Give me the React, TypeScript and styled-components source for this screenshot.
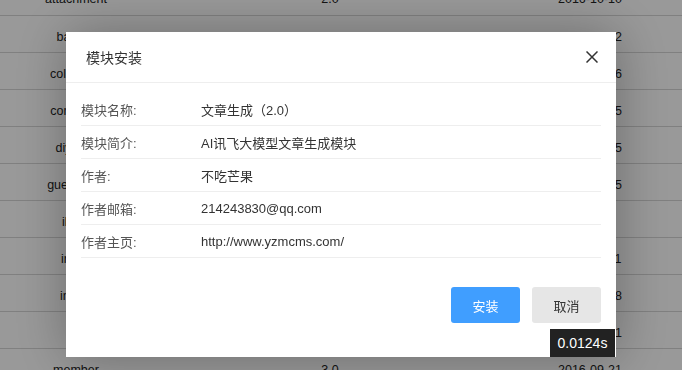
import styled, { createGlobalStyle } from 'styled-components'

const modules = [
	{ name: 'attachment', version: '2.0', date: '2016-10-10' },
	{ name: 'banner', version: '2.0', date: '2017-05-12' },
	{ name: 'collection', version: '2.0', date: '2017-04-26' },
	{ name: 'comment', version: '2.0', date: '2016-10-25' },
	{ name: 'diyform', version: '2.0', date: '2017-02-15' },
	{ name: 'guestbook', version: '2.0', date: '2016-12-05' },
	{ name: 'ilinks', version: '2.0', date: '' },
	{ name: 'index', version: '2.0', date: '2016-08-11' },
	{ name: 'install', version: '2.0', date: '2016-08-18' },
	{ name: 'mip', version: '2.0', date: '2016-09-01' },
	{ name: 'member', version: '3.0', date: '2016-09-21' },
]

const info = [
	{ label: '模块名称:', value: '文章生成（2.0）' },
	{ label: '模块简介:', value: 'AI讯飞大模型文章生成模块' },
	{ label: '作者:', value: '不吃芒果' },
	{ label: '作者邮箱:', value: '214243830@qq.com' },
	{ label: '作者主页:', value: 'http://www.yzmcms.com/' },
]

function App() {
	return (
		<>
			<GlobalStyle />
			<Page>
				<Table>
					<tbody>
						{modules.map(m => (
							<tr key={m.name}>
								<Cell>{m.name}</Cell>
								<Cell>{m.version}</Cell>
								<Cell>{m.date}</Cell>
							</tr>
						))}
					</tbody>
				</Table>
			</Page>

			<Shade>
				<Dialog>
					<Header>
						<Title>模块安装</Title>
						<Close aria-label="关闭">
							<svg width="12" height="12" viewBox="0 0 12 12">
								<path d="M0.5 0.5 L11.5 11.5 M11.5 0.5 L0.5 11.5" stroke="#333" strokeWidth="1.5" />
							</svg>
						</Close>
					</Header>
					<Body>
						{info.map(row => (
							<InfoRow key={row.label}>
								<Label>{row.label}</Label>
								<Value>{row.value}</Value>
							</InfoRow>
						))}
					</Body>
					<Footer>
						<Button $primary>安装</Button>
						<Button>取消</Button>
					</Footer>
				</Dialog>
			</Shade>

			<Timer>0.0124s</Timer>
		</>
	)
}

export default App

let GlobalStyle = createGlobalStyle`
	html, body {
		margin: 0;
		padding: 0;
		width: 682px;
		height: 370px;
		overflow: hidden;
		background: #fff;
		font-family: "Liberation Sans", "Noto Sans CJK SC", "Microsoft YaHei", sans-serif;
		color: #333;
	}
`

let Page = styled.div`
	height: 370px;
	overflow: hidden;
`

let Table = styled.table`
	width: 682px;
	margin-top: -22px;
	border-collapse: collapse;
	font-size: 12.5px;
	color: #222;

	tr {
		height: 37px;
		border-bottom: 1px solid #d6d6d6;
	}
`

let Cell = styled.td`
	padding: 6px 0 0;
	text-align: center;

	&:nth-child(1) { width: 152px; }
	&:nth-child(2) { width: 356px; }
	&:nth-child(3) { padding-right: 10px; }
`

let Shade = styled.div`
	position: fixed;
	inset: 0;
	background: rgba(0, 0, 0, 0.4);
	display: flex;
	justify-content: center;
	align-items: flex-start;
	padding-top: 32px;
	box-sizing: border-box;
`

let Dialog = styled.div`
	width: 550px;
	height: 325px;
	background: #fff;
	box-shadow: 1px 1px 50px rgba(0, 0, 0, 0.3);
	display: flex;
	flex-direction: column;
`

let Header = styled.div`
	height: 50px;
	flex-shrink: 0;
	display: flex;
	align-items: center;
	justify-content: space-between;
	padding: 0 18px 0 20px;
	border-bottom: 1px solid #eee;
`

let Title = styled.span`
	font-size: 14px;
	color: #333;
`

let Close = styled.button`
	border: 0;
	background: none;
	padding: 0;
	width: 12px;
	height: 12px;
	display: flex;
	cursor: pointer;
`

let Body = styled.div`
	padding: 10px 15px 0;
`

let InfoRow = styled.div`
	display: flex;
	align-items: center;
	height: 32px;
	border-bottom: 1px solid #eee;
	font-size: 13px;
`

let Label = styled.span`
	width: 120px;
	flex-shrink: 0;
	color: #555;
`

let Value = styled.span`
	color: #333;
`

let Footer = styled.div`
	display: flex;
	justify-content: flex-end;
	gap: 12px;
	padding: 29px 15px 0;
`

let Button = styled.button<{ $primary?: boolean }>`
	width: 69px;
	height: 36px;
	border: 0;
	border-radius: 3px;
	font-family: inherit;
	font-size: 13px;
	cursor: pointer;
	background: ${p => (p.$primary ? '#409eff' : '#e6e6e6')};
	color: ${p => (p.$primary ? '#fff' : '#333')};
`

let Timer = styled.div`
	position: fixed;
	left: 550px;
	top: 329px;
	width: 65px;
	height: 28px;
	box-sizing: border-box;
	background: #222;
	color: #fff;
	font-size: 14px;
	display: flex;
	align-items: center;
	justify-content: center;
`
